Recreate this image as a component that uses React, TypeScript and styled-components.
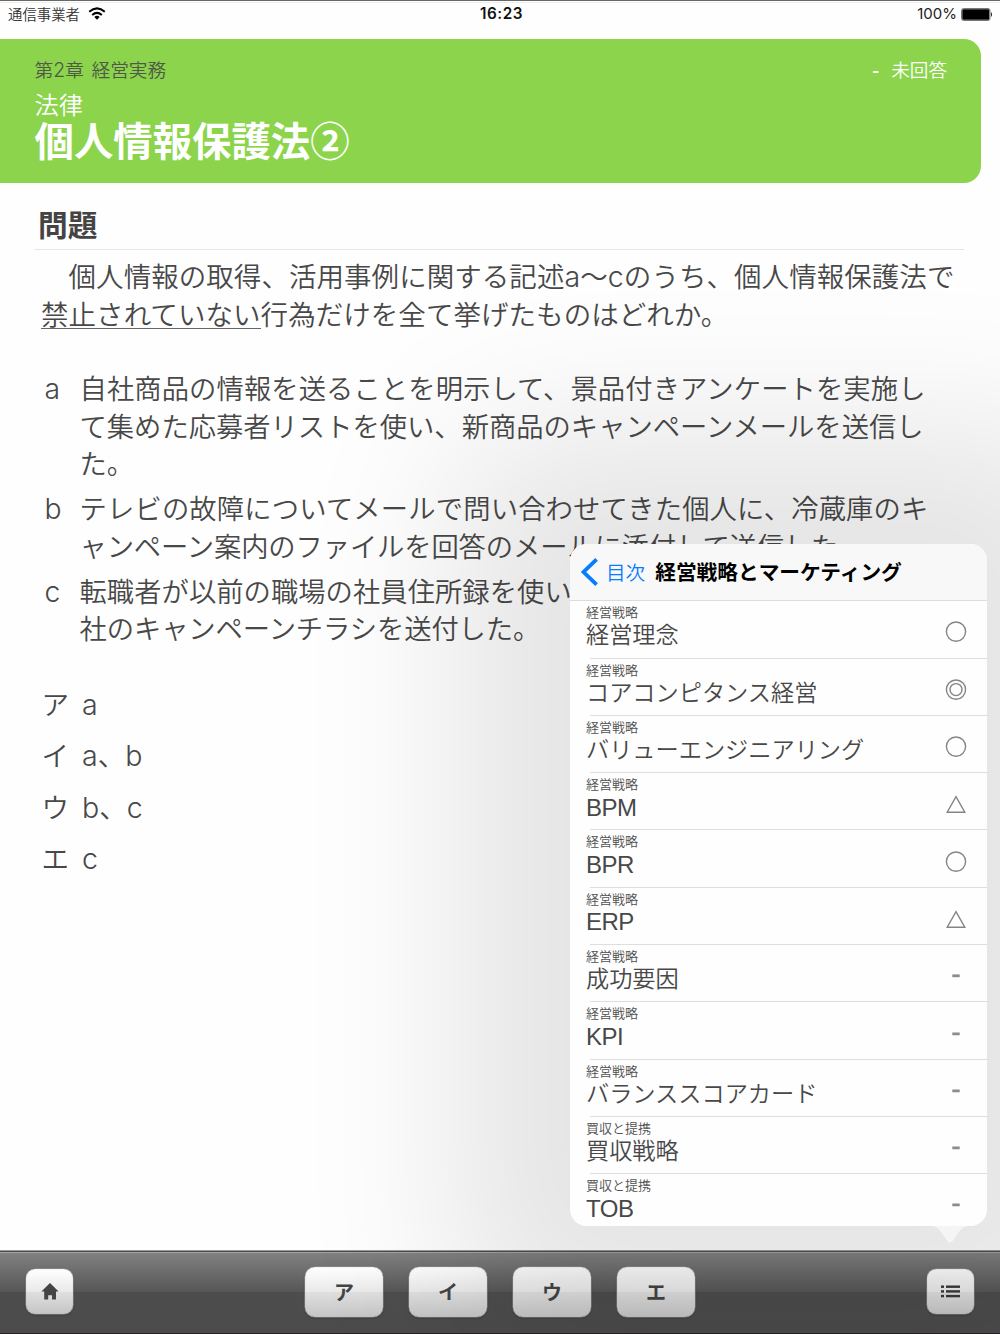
import React from "react";
import styled, { createGlobalStyle } from "styled-components";

const jp = `"Noto Sans CJK JP", sans-serif`;

const GlobalStyle = createGlobalStyle`
  * { box-sizing: border-box; }
  body { margin: 0; background: #fff; font-family: ${jp}; }
  h1, h2, p { margin: 0; font-weight: inherit; }
  button { font: inherit; border: 0; padding: 0; background: none; }
`;

const Screen = styled.div`
  position: relative;
  display: flex;
  flex-direction: column;
  width: 1000px;
  height: 1334px;
  overflow: hidden;
  background: #fefefe;
  color: #484848;
`;

const StatusBar = styled.header`
  display: grid;
  grid-template-columns: 1fr auto 1fr;
  align-items: center;
  height: 39px;
  padding: 0 7px 12px 8px;
  border-top: 1px solid #68676a;
  box-shadow: inset 0 1px 0 #fff, inset 0 2px 0 #eee;
`;

const Carrier = styled.div`
  display: flex;
  align-items: center;
  gap: 8px;
  font-size: 14.4px;
  font-weight: 350;
  line-height: 18px;
  padding-bottom: 1px;
  color: #333;
`;

const Clock = styled.div`
  padding-left: 2px;
  font: 600 15.3px/20px Inter, sans-serif;
  letter-spacing: 0.5px;
  color: #111;
`;

const Battery = styled.div`
  display: flex;
  align-items: center;
  justify-content: flex-end;
  gap: 4px;
  font: 400 15px/20px Inter, sans-serif;
  color: #222;
`;

const Banner = styled.section`
  display: flex;
  justify-content: space-between;
  align-items: flex-start;
  width: 981px;
  height: 144px;
  padding: 16px 34px 0 34.5px;
  border-radius: 0 17px 17px 0;
  background: #8bd44b;
`;

const Chapter = styled.p`
  font-size: 18.7px;
  font-weight: 350;
  line-height: 28px;
  word-spacing: 3.5px;
  color: #50584a;
`;

const Section = styled.p`
  margin-top: 4px;
  font-size: 24.3px;
  font-weight: 350;
  line-height: 34px;
  color: #fff;
`;

const Title = styled.h1`
  margin-top: -2px;
  font-size: 39.4px;
  font-weight: 700;
  line-height: 40px;
  color: #fff;
`;

const AnswerState = styled.p`
  display: flex;
  gap: 12px;
  font-size: 18.6px;
  font-weight: 350;
  line-height: 28px;
  color: #fff;
`;

const Dash = styled.span`
  font-weight: 700;
`;

const Question = styled.main`
  flex: 1;
  padding: 17px 36px 0 34px;
`;

const Heading = styled.h2`
  height: 50px;
  padding-left: 4px;
  border-bottom: 1px solid #e6e6e6;
  font-size: 29.7px;
  font-weight: 700;
  line-height: 47px;
  color: #444;
`;

const Statement = styled.p`
  padding: 7px 0 0 7px;
  font-size: 27.5px;
  font-weight: 350;
  letter-spacing: 0.05px;
  line-height: 37.5px;
  white-space: nowrap;
`;

const Emphasis = styled.span`
  display: inline-block;
  height: 34px;
  border-bottom: 1.5px solid #666;
`;

const CaseList = styled.div`
  display: flex;
  flex-direction: column;
  gap: 7.5px;
  margin-top: 37px;
`;

const Case = styled.div`
  display: grid;
  grid-template-columns: 35px 1fr;
  padding-left: 10.5px;
  font-size: 27.3px;
  font-weight: 350;
  line-height: 37.5px;
  white-space: nowrap;
`;

const CaseLine = styled.p<{ $tracking: number }>`
  letter-spacing: ${(p) => p.$tracking}px;
`;

const ChoiceList = styled.div`
  display: flex;
  flex-direction: column;
  margin-top: 31px;
`;

const Choice = styled.div`
  display: grid;
  grid-template-columns: 40.5px 1fr;
  padding-left: 7.5px;
  font-size: 27.5px;
  font-weight: 350;
  line-height: 51.5px;
`;

const Latin = styled.span`
  font-family: Inter, sans-serif;
  font-size: 1.04em;
  line-height: 1;
`;

const Toolbar = styled.footer`
  display: grid;
  grid-template-columns: 1fr auto 1fr;
  align-items: center;
  height: 84px;
  padding: 0 26px 1px;
  border-top: 1px solid #9a9a9a;
  border-bottom: 1px solid #262226;
  background: linear-gradient(#4c4c4c 0 1px, #a2a2a2 1px 2px, #818181 2px, #565656 41px, #4d4d4d 41px, #4b4b4b);
`;

const ChoiceKeys = styled.div`
  display: flex;
  gap: 26px;
`;

const Key = styled.button<{ $wide?: boolean; $end?: boolean }>`
  display: flex;
  align-items: center;
  justify-content: center;
  justify-self: ${(p) => (p.$end ? "end" : "start")};
  width: ${(p) => (p.$wide ? 78 : 47)}px;
  height: ${(p) => (p.$wide ? 50 : 45)}px;
  padding-bottom: ${(p) => (p.$wide ? 1 : 0)}px;
  border-radius: ${(p) => (p.$wide ? 10 : 9)}px;
  background: linear-gradient(#fff, #e9e9e9 50%, #dfdfdf 51%, #c5c5c5);
  box-shadow: 0 0 0 0.5px #999, inset 0 0 1px #aaa, 0 1px 2px rgba(0, 0, 0, 0.45);
  font-size: 20px;
  font-weight: 700;
  color: #444;
`;

const Popover = styled.aside`
  position: absolute;
  z-index: 2;
  left: 570px;
  top: 544px;
  width: 417px;
  height: 682px;
  border-radius: 17px;
  box-shadow: 0 0 160px 115px rgba(0, 0, 0, 0.1);
`;

const PopoverPanel = styled.div`
  height: 100%;
  overflow: hidden;
  border-radius: 17px;
  background: #fefefe;
`;

const PopoverHeader = styled.div`
  display: flex;
  align-items: center;
  height: 57.3px;
  padding: 0 11px;
  border-bottom: 1px solid #dcdcdc;
  background: #f8f8f8;
`;

const Back = styled.span`
  display: flex;
  align-items: center;
  gap: 8px;
  padding-bottom: 1px;
  font-size: 19.6px;
  font-weight: 350;
  color: #087cff;
`;

const PopoverTitle = styled.h2`
  margin-left: 10px;
  padding-bottom: 2px;
  font-size: 20.7px;
  font-weight: 700;
  color: #000;
`;

const Row = styled.div`
  display: flex;
  align-items: center;
  justify-content: space-between;
  height: 57.3px;
  margin-left: 20px;
  padding-right: 20px;
  border-bottom: 1px solid #dedede;
`;

const RowText = styled.div`
  height: 100%;
  margin-left: -4px;
  padding-top: 3px;
`;

const RowLabel = styled.p`
  font-size: 13px;
  font-weight: 350;
  line-height: 16px;
  color: #505050;
`;

const RowTitle = styled.p<{ $latin: boolean }>`
  padding-top: ${(p) => (p.$latin ? 1.5 : 0)}px;
  font-family: ${(p) => (p.$latin ? `"Liberation Sans", sans-serif` : jp)};
  font-size: ${(p) => (p.$latin ? 24 : 23.2)}px;
  font-weight: ${(p) => (p.$latin ? 400 : 350)};
  letter-spacing: ${(p) => (p.$latin ? -0.5 : 0)}px;
  line-height: ${(p) => (p.$latin ? 28 : 27)}px;
`;

const Pointer = styled.svg`
  position: absolute;
  left: 360px;
  top: 682px;
`;

type MarkKind = "circle" | "double" | "triangle" | "none";

const Mark = ({ kind }: { kind: MarkKind }) => (
  <svg width="22" height="28" viewBox="0 0 22 28" fill="none" stroke="#858585" strokeWidth="1.4">
    {(kind === "circle" || kind === "double") && <circle cx="11" cy="16.6" r="9.6" />}
    {kind === "double" && <circle cx="11" cy="16.6" r="6" />}
    {kind === "triangle" && <path d="M11 9.7 L19.8 25.2 H2.2 Z" />}
    {kind === "none" && <path d="M7.3 16.8 H14.7" strokeWidth="2.8" stroke="#8c8c8c" />}
  </svg>
);

// Splits out a–z and digits so that they take the Latin face inside Japanese text.
const Mixed = ({ text }: { text: string }) => (
  <>
    {text.split(/([a-z0-9]+)/).map((part, i) => (i % 2 ? <Latin key={i}>{part}</Latin> : part))}
  </>
);

const rows: { label: string; title: string; mark: MarkKind }[] = [
  { label: "経営戦略", title: "経営理念", mark: "circle" },
  { label: "経営戦略", title: "コアコンピタンス経営", mark: "double" },
  { label: "経営戦略", title: "バリューエンジニアリング", mark: "circle" },
  { label: "経営戦略", title: "BPM", mark: "triangle" },
  { label: "経営戦略", title: "BPR", mark: "circle" },
  { label: "経営戦略", title: "ERP", mark: "triangle" },
  { label: "経営戦略", title: "成功要因", mark: "none" },
  { label: "経営戦略", title: "KPI", mark: "none" },
  { label: "経営戦略", title: "バランススコアカード", mark: "none" },
  { label: "買収と提携", title: "買収戦略", mark: "none" },
  { label: "買収と提携", title: "TOB", mark: "none" },
];

const cases: { key: string; lines: { text: string; tracking: number }[] }[] = [
  {
    key: "a",
    lines: [
      { text: "自社商品の情報を送ることを明示して、景品付きアンケートを実施し", tracking: 0.1 },
      { text: "て集めた応募者リストを使い、新商品のキャンペーンメールを送信し", tracking: 0 },
      { text: "た。", tracking: 0 },
    ],
  },
  {
    key: "b",
    lines: [
      { text: "テレビの故障についてメールで問い合わせてきた個人に、冷蔵庫のキ", tracking: 0.17 },
      { text: "ャンペーン案内のファイルを回答のメールに添付して送信した。", tracking: -0.12 },
    ],
  },
  {
    key: "c",
    lines: [
      { text: "転職者が以前の職場の社員住所録を使い", tracking: 0.05 },
      { text: "社のキャンペーンチラシを送付した。", tracking: -0.08 },
    ],
  },
];

const choices = [
  ["ア", "a"],
  ["イ", "a、b"],
  ["ウ", "b、c"],
  ["エ", "c"],
];

export default function App() {
  return (
    <>
      <GlobalStyle />
      <Screen>
        <StatusBar>
          <Carrier>
            通信事業者
            <svg width="18" height="13" viewBox="0 0 18 13" fill="none" stroke="#000" strokeWidth="2">
              <path d="M1.2 4.8 Q9 -2 16.8 4.8" />
              <path d="M4.2 7.9 Q9 3.8 13.8 7.9" />
              <path d="M6.3 10 Q9 7.6 11.7 10 L9 12.8 Z" fill="#000" stroke="none" />
            </svg>
          </Carrier>
          <Clock>16:23</Clock>
          <Battery>
            100%
            <svg width="32" height="13" viewBox="0 0 32 13">
              <rect x="0.5" y="0.5" width="28.5" height="12" rx="2" fill="#fff" stroke="#777" />
              <rect x="1.3" y="1.3" width="27" height="10.4" rx="1.2" fill="#000" />
              <path d="M30 4 Q32 6.5 30 9 Z" fill="#111" />
            </svg>
          </Battery>
        </StatusBar>

        <Banner>
          <div>
            <Chapter>
              <Mixed text="第2章 経営実務" />
            </Chapter>
            <Section>法律</Section>
            <Title>個人情報保護法②</Title>
          </div>
          <AnswerState>
            <Dash>-</Dash>
            <span>未回答</span>
          </AnswerState>
        </Banner>

        <Question>
          <Heading>問題</Heading>
          <Statement>
            <Mixed text={"\u3000個人情報の取得、活用事例に関する記述a〜cのうち、個人情報保護法で"} />
            <br />
            <Emphasis>禁止されていない</Emphasis>行為だけを全て挙げたものはどれか。
          </Statement>
          <CaseList>
            {cases.map((c) => (
              <Case key={c.key}>
                <span>
                  <Mixed text={c.key} />
                </span>
                <div>
                  {c.lines.map((line) => (
                    <CaseLine key={line.text} $tracking={line.tracking}>
                      {line.text}
                    </CaseLine>
                  ))}
                </div>
              </Case>
            ))}
          </CaseList>
          <ChoiceList>
            {choices.map(([key, text]) => (
              <Choice key={key}>
                <span>{key}</span>
                <span>
                  <Mixed text={text} />
                </span>
              </Choice>
            ))}
          </ChoiceList>
        </Question>

        <Toolbar>
          <Key>
            <svg width="18" height="17" viewBox="0 0 18 17" fill="#444">
              <path d="M9 0 L17.6 8.6 H15 V16.5 H11 V12.3 H7.2 V16.5 H3.2 V8.6 H0.4 Z" />
            </svg>
          </Key>
          <ChoiceKeys>
            {choices.map(([key]) => (
              <Key key={key} $wide>
                {key}
              </Key>
            ))}
          </ChoiceKeys>
          <Key $end>
            <svg width="19" height="13" viewBox="0 0 19 13" fill="#383838">
              {[0.5, 5.2, 9.9].map((y) => (
                <React.Fragment key={y}>
                  <rect x="0" y={y} width="3" height="2.4" />
                  <rect x="5" y={y} width="14" height="2.4" />
                </React.Fragment>
              ))}
            </svg>
          </Key>
        </Toolbar>

        <Popover>
          <PopoverPanel>
            <PopoverHeader>
              <Back>
                <svg width="17" height="28" viewBox="0 0 17 28" fill="none" stroke="#087cff" strokeWidth="3.8">
                  <path d="M15.6 1.4 L2.6 14 L15.6 26.6" />
                </svg>
                目次
              </Back>
              <PopoverTitle>経営戦略とマーケティング</PopoverTitle>
            </PopoverHeader>
            {rows.map((r) => (
              <Row key={r.title}>
                <RowText>
                  <RowLabel>{r.label}</RowLabel>
                  <RowTitle $latin={/^[A-Z]/.test(r.title)}>{r.title}</RowTitle>
                </RowText>
                <Mark kind={r.mark} />
              </Row>
            ))}
          </PopoverPanel>
          <Pointer width="40" height="18" viewBox="0 0 40 18">
            <path d="M0 0 C6 0 8 2 11 6 L17 14.500 Q20 18.500 23 14.500 L29 6 C32 2 34 0 40 0 Z" fill="#f5f5f5" />
          </Pointer>
        </Popover>
      </Screen>
    </>
  );
}
